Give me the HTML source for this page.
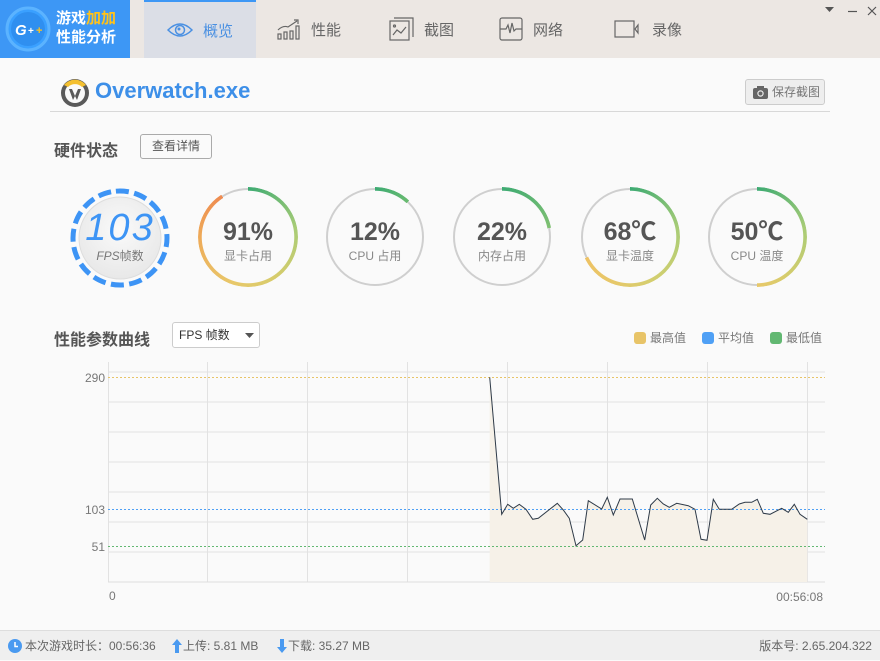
<!DOCTYPE html>
<html><head><meta charset="utf-8"><style>
*{margin:0;padding:0;box-sizing:border-box}
body{width:880px;height:660px;background:#fafafa;font-family:"Liberation Sans","Noto Sans CJK SC",sans-serif;position:relative;overflow:hidden;color:#555}
.hdr{position:absolute;left:0;top:0;width:880px;height:58px;background:#ece7e3}
.logo{position:absolute;left:0;top:0;width:130px;height:58px;background:#3d97f5}
.tab{position:absolute;top:0;height:58px;display:flex;align-items:center;font-size:15px;color:#666}
.tab svg{margin-right:10px}
.act{left:144px;width:112px;background:#dbdee6;border-top:2px solid #3d97f5;color:#4a90e2;justify-content:center}
.abs{position:absolute}
.g{position:absolute;width:100px;height:100px;border-radius:50%}
.ring{position:absolute;inset:0;border-radius:50%;-webkit-mask:radial-gradient(circle,transparent 46px,#000 46.5px);mask:radial-gradient(circle,transparent 46px,#000 46.5px)}
.grey{position:absolute;inset:1px;border-radius:50%;border:2px solid #cfcfcf}
.val{position:absolute;left:0;width:100px;top:30px;height:30px;line-height:30px;text-align:center;font-size:25px;font-weight:bold;color:#555;overflow:visible}
.lab{position:absolute;left:0;width:100px;top:61px;height:16px;line-height:16px;text-align:center;font-size:12px;color:#888}
.foot{position:absolute;left:0;top:630px;width:880px;height:30px;background:#efefef;border-top:1px solid #ddd;font-size:12px;color:#666;line-height:30px}
</style></head><body>
<div class="hdr">
 <div class="logo">
  <svg width="130" height="58" class="abs" style="left:0;top:0">
   <circle cx="28" cy="29" r="21" fill="#3aa0ff" stroke="#5bb3ff" stroke-width="3"/>
   <circle cx="28" cy="29" r="17" fill="#2f8ff0"/>
   <text x="15" y="35" font-size="15" font-weight="bold" font-style="italic" fill="#fff" font-family="Liberation Sans">G</text>
   <text x="28" y="34" font-size="10" font-weight="bold" fill="#fff" font-family="Liberation Sans">+</text>
   <text x="36" y="34" font-size="11" font-weight="bold" fill="#ffc21a" font-family="Liberation Sans">+</text>
  </svg>
  <div class="abs" style="left:56px;top:9px;font-size:15px;font-weight:bold;color:#fff;line-height:19px;letter-spacing:0px">游戏<span style="color:#ffc21a">加加</span><br>性能分析</div>
 </div>
 <div class="tab act"><svg width="26" height="16" viewBox="0 0 26 16"><path d="M1 8 Q13 -4 25 8 Q13 20 1 8Z" fill="none" stroke="#4a90e2" stroke-width="1.5"/><circle cx="13" cy="8" r="4.5" fill="none" stroke="#4a90e2" stroke-width="1.5"/><circle cx="12" cy="7" r="1.5" fill="#4a90e2"/></svg>概览</div>
 <div class="tab" style="left:277px"><svg width="24" height="22" viewBox="0 0 24 22"><g fill="none" stroke="#666" stroke-width="1.2"><rect x="1" y="16" width="3" height="5"/><rect x="7" y="14" width="3" height="7"/><rect x="13" y="13" width="3" height="8"/><rect x="19" y="8" width="3" height="13"/><path d="M1 12 Q6 7 11 9 L20 3 M17 2 L21 2 L21 6"/></g></svg>性能</div>
 <div class="tab" style="left:389px"><svg width="25" height="24" viewBox="0 0 25 24"><g fill="none" stroke="#666" stroke-width="1.2"><rect x="1" y="4" width="19" height="19"/><path d="M5 1 H24 V20"/><path d="M4 18 L8 13 L12 16 L17 10"/><circle cx="5.5" cy="9" r="1"/></g></svg>截图</div>
 <div class="tab" style="left:499px"><svg width="24" height="24" viewBox="0 0 24 24"><g fill="none" stroke="#666" stroke-width="1.2"><rect x="1" y="1" width="22" height="22" rx="2"/><path d="M1 12 H7 L9 8 L11 16 L13 6 L15 14 L17 12 H23"/></g></svg>网络</div>
 <div class="tab" style="left:614px"><svg width="28" height="18" viewBox="0 0 28 18"><g fill="none" stroke="#666" stroke-width="1.2"><rect x="1" y="1" width="19" height="16"/><path d="M24 5 L21 9 L24 13 Z"/></g></svg>录像</div>
 <svg class="abs" style="left:822px;top:4px" width="56" height="14"><path d="M3 3 H12 L7.5 8Z" fill="#555"/><path d="M26 7.5 H35" stroke="#555" stroke-width="1.2"/><path d="M46 3 L54 11 M54 3 L46 11" stroke="#555" stroke-width="1.2"/></svg>
</div>

<svg class="abs" style="left:59px;top:76px" width="32" height="32" viewBox="0 0 32 32">
 <circle cx="16" cy="17" r="14" fill="#5a5a5a"/><circle cx="16" cy="17" r="10" fill="#fafafa"/>
 <path d="M5 9 A14 14 0 0 1 27 9 L23 11 A10 10 0 0 0 9 11Z" fill="#f4c030"/>
 <path d="M10 13 L14 24 L16 20 L18 24 L22 13 L19 13 L16 20 L13 13Z" fill="#5a5a5a"/>
</svg>
<div class="abs" style="left:95px;top:78px;font-size:22px;font-weight:bold;color:#3d8fe8">Overwatch.exe</div>
<div class="abs" style="left:50px;top:111px;width:780px;height:1px;background:#d8d8d8"></div>
<div class="abs" style="left:745px;top:79px;width:80px;height:26px;border:1px solid #ccc;border-radius:3px;background:#eee;font-size:12px;color:#777;line-height:24px;padding-left:26px">保存截图
 <svg class="abs" style="left:7px;top:6px" width="15" height="13"><rect x="0" y="2" width="15" height="11" rx="2" fill="#666"/><rect x="4" y="0" width="7" height="3" fill="#666"/><circle cx="7.5" cy="7.5" r="3.2" fill="#eee"/><circle cx="7.5" cy="7.5" r="2" fill="#666"/></svg></div>

<div class="abs" style="left:54px;top:137px;font-size:16px;font-weight:bold;color:#555">硬件状态</div>
<div class="abs" style="left:140px;top:134px;width:72px;height:25px;border:1px solid #aaa;border-radius:3px;font-size:12px;line-height:23px;text-align:center;color:#555">查看详情</div>

<!-- FPS gauge -->
<svg class="abs" style="left:70px;top:188px" width="100" height="100">
 <circle cx="50" cy="50" r="47" fill="none" stroke="#3d94f5" stroke-width="5" stroke-dasharray="13 5.46" transform="rotate(-95 50 50)"/>
 <defs><radialGradient id="ig" cx="50%" cy="40%" r="60%"><stop offset="0" stop-color="#fafafa"/><stop offset="1" stop-color="#e8e8e8"/></radialGradient></defs>
 <circle cx="50" cy="50" r="41" fill="url(#ig)" stroke="#ddd" stroke-width="1"/>
</svg>
<div class="abs" style="left:70px;top:208px;width:100px;height:40px;line-height:40px;text-align:center;font-size:38px;font-style:italic;color:#3d94f5;font-family:'Liberation Sans',sans-serif;letter-spacing:2px">103</div>
<div class="abs" style="left:70px;top:247px;width:100px;text-align:center;font-size:12px;color:#777"><i>FPS</i>帧数</div>

<div class="g" style="left:198px;top:187px"><div class="grey"></div><div class="ring" style="background:conic-gradient(#3caa72 0%,#a8cc76 22%,#d6cc6c 40%,#e8c86a 55%,#eeaa58 75%,#ee8a50 91%,transparent 91%)"></div><div class="val">91%</div><div class="lab">显卡占用</div></div>
<div class="g" style="left:325px;top:187px"><div class="grey"></div><div class="ring" style="background:conic-gradient(#3caa72 0%,#6abb70 12%,transparent 12%)"></div><div class="val">12%</div><div class="lab">CPU 占用</div></div>
<div class="g" style="left:452px;top:187px"><div class="grey"></div><div class="ring" style="background:conic-gradient(#3caa72 0%,#80c072 22%,transparent 22%)"></div><div class="val">22%</div><div class="lab">内存占用</div></div>
<div class="g" style="left:580px;top:187px"><div class="grey"></div><div class="ring" style="background:conic-gradient(#3caa72 0%,#a8cc76 22%,#d0cf70 40%,#e6c86a 55%,#eec264 68%,transparent 68%)"></div><div class="val">68℃</div><div class="lab">显卡温度</div></div>
<div class="g" style="left:707px;top:187px"><div class="grey"></div><div class="ring" style="background:conic-gradient(#3caa72 0%,#a8cc76 22%,#d6cc6c 40%,#e8c86a 50%,transparent 50%)"></div><div class="val">50℃</div><div class="lab">CPU 温度</div></div>

<div class="abs" style="left:54px;top:326px;font-size:16px;font-weight:bold;color:#555">性能参数曲线</div>
<div class="abs" style="left:172px;top:322px;width:88px;height:26px;border:1px solid #ccc;border-radius:3px;background:#fff;font-size:12px;line-height:24px;padding-left:6px;color:#333">FPS 帧数<svg class="abs" style="left:72px;top:10px" width="9" height="6"><path d="M0 0H9L4.5 5Z" fill="#555"/></svg></div>
<div class="abs" style="left:634px;top:329px;font-size:12px;color:#777;display:flex;align-items:center">
 <span style="width:12px;height:12px;border-radius:3px;background:#e8c468;margin-right:4px"></span>最高值
 <span style="width:12px;height:12px;border-radius:3px;background:#4fa0f5;margin:0 4px 0 16px"></span>平均值
 <span style="width:12px;height:12px;border-radius:3px;background:#62b872;margin:0 4px 0 16px"></span>最低值
</div>

<svg class="abs" style="left:0;top:355px" width="880" height="250">
 <g stroke="#e2e2e2" stroke-width="1">
  <path d="M108 17H825M108 47H825M108 77H825M108 107H825M108 137H825M108 167H825M108 197H825"/>
  <path d="M207.5 7V227M307.5 7V227M407.5 7V227M507.5 7V227M607.5 7V227M707.5 7V227M807.5 7V227M108.5 7V227"/>
 </g>
 <path d="M108 227H825" stroke="#ddd"/>
 <path d="M489.7 22.3 L501.7 159.3 L507.7 149.3 L513.3 153.3 L519.3 149.3 L526 154.3 L532.7 164.3 L538.3 163.3 L557.3 148.3 L563.3 155 L569.3 163.3 L576 190.7 L582.7 185 L588.3 145.7 L601.7 154 L607.3 142.3 L613.3 160 L620 144 L632.3 144 L644.7 185 L650.7 150 L657.3 143.3 L663.3 149 L669.3 152.3 L676.7 148.3 L688.3 150.7 L695 154.3 L701 184.3 L707 185.3 L713.3 144.3 L719.3 154.3 L731.7 154.3 L739.3 149 L745 147.3 L751.7 147.3 L757.3 144.3 L763.3 158.3 L770 159.3 L781.7 153.3 L788.3 157.3 L794.3 149.3 L800 159.3 L807.3 164.3 L807.3 227 L489.7 227Z" fill="#f6f1e8"/>
 <path d="M108 22.5H825" stroke="#e8c468" stroke-dasharray="2 2"/>
 <path d="M108 154.5H825" stroke="#4fa0f5" stroke-dasharray="2 2"/>
 <path d="M108 191.5H825" stroke="#62b872" stroke-dasharray="2 2"/>
 <path d="M489.7 22.3 L501.7 159.3 L507.7 149.3 L513.3 153.3 L519.3 149.3 L526 154.3 L532.7 164.3 L538.3 163.3 L557.3 148.3 L563.3 155 L569.3 163.3 L576 190.7 L582.7 185 L588.3 145.7 L601.7 154 L607.3 142.3 L613.3 160 L620 144 L632.3 144 L644.7 185 L650.7 150 L657.3 143.3 L663.3 149 L669.3 152.3 L676.7 148.3 L688.3 150.7 L695 154.3 L701 184.3 L707 185.3 L713.3 144.3 L719.3 154.3 L731.7 154.3 L739.3 149 L745 147.3 L751.7 147.3 L757.3 144.3 L763.3 158.3 L770 159.3 L781.7 153.3 L788.3 157.3 L794.3 149.3 L800 159.3 L807.3 164.3" fill="none" stroke="#2e3a48" stroke-width="1"/>
 <g font-size="12" fill="#777" font-family="Liberation Sans" text-anchor="end">
  <text x="105" y="27">290</text><text x="105" y="159">103</text><text x="105" y="196">51</text>
 </g>
 <text x="109" y="245" font-size="12" fill="#777" font-family="Liberation Sans">0</text>
 <text x="823" y="246" font-size="12" fill="#777" font-family="Liberation Sans" text-anchor="end">00:56:08</text>
</svg>

<div class="foot">
 <svg class="abs" style="left:8px;top:8px" width="14" height="14"><circle cx="7" cy="7" r="7" fill="#4a9af0"/><path d="M7 3V7.5H10" stroke="#fff" stroke-width="1.5" fill="none"/></svg>
 <span class="abs" style="left:25px">本次游戏时长：00:56:36</span>
 <svg class="abs" style="left:172px;top:8px" width="10" height="14"><path d="M5 0L10 6H7V14H3V6H0Z" fill="#4a9af0"/></svg>
 <span class="abs" style="left:183px">上传: 5.81 MB</span>
 <svg class="abs" style="left:277px;top:8px" width="10" height="14"><path d="M5 14L10 8H7V0H3V8H0Z" fill="#4a9af0"/></svg>
 <span class="abs" style="left:288px">下载: 35.27 MB</span>
 <span class="abs" style="right:8px">版本号: 2.65.204.322</span>
</div>
</body></html>
